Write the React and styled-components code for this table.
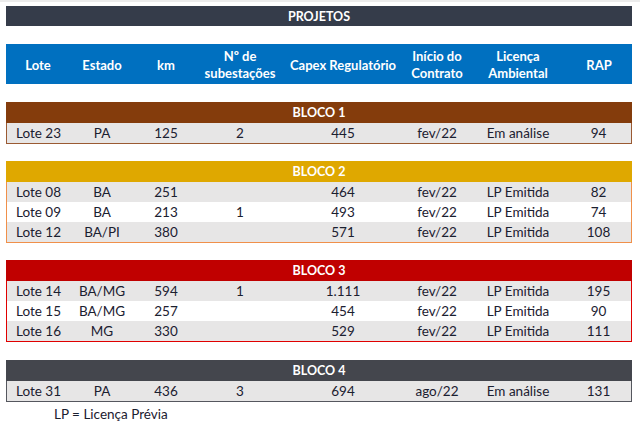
import { createGlobalStyle, styled } from "styled-components";

const GlobalStyle = createGlobalStyle`
  body {
    margin: 0;
    background: #ffffff;
    font-family: Lato, "Open Sans", sans-serif;
  }
`;

const COLUMNS = "64px 64px 64px 84px 122px 66px 96px 66px";
// body rows sit inside a 1px border on each side
const ROW_COLUMNS = "63px 64px 64px 84px 122px 66px 96px 65px";

const Page = styled.div`
  width: 640px;
  height: 427px;
  box-sizing: border-box;
  border-top: 2px solid #ececec;
  padding: 4px 8px 0 6px;
  display: flex;
  flex-direction: column;
`;

const TitleBar = styled.div`
  height: 20px;
  background: #353c4a;
  color: #ffffff;
  font-weight: 700;
  font-size: 12.5px;
  display: flex;
  align-items: center;
  justify-content: center;
`;

const HeaderRow = styled.div`
  margin-top: 18px;
  height: 40px;
  background: #0070c0;
  display: grid;
  grid-template-columns: ${COLUMNS};
  color: #ffffff;
  font-weight: 700;
  font-size: 13px;
  line-height: 17px;
`;

const HeaderCell = styled.div`
  display: flex;
  align-items: center;
  justify-content: center;
  text-align: center;
  padding-top: 2px;
`;

const Block = styled.div`
  margin-top: ${(p) => p.$gap}px;
`;

const BlockBar = styled.div`
  height: 21px;
  background: ${(p) => p.$color};
  color: #ffffff;
  font-weight: 700;
  font-size: 12.5px;
  display: flex;
  align-items: center;
  justify-content: center;
`;

const BlockBody = styled.div`
  border: 1px solid ${(p) => p.$border};
  border-top: none;
`;

const Row = styled.div`
  height: 20px;
  display: grid;
  grid-template-columns: ${ROW_COLUMNS};
  background: ${(p) => (p.$shade ? "#e7e6e6" : "#ffffff")};
  color: #1b2030;
  font-size: 13.5px;
  align-items: center;
`;

const Cell = styled.div`
  text-align: ${(p) => (p.$left ? "left" : "center")};
  padding-left: ${(p) => (p.$left ? "9px" : "0")};
  white-space: nowrap;
`;

const Footnote = styled.div`
  margin-top: 4px;
  padding-left: 48px;
  font-size: 13.5px;
  color: #1b2030;
`;

const blocks = [
  {
    name: "BLOCO 1",
    color: "#843c0c",
    border: "#9a5a33",
    gap: 18,
    rows: [["Lote 23", "PA", "125", "2", "445", "fev/22", "Em análise", "94"]],
  },
  {
    name: "BLOCO 2",
    color: "#dfa800",
    border: "#f0904a",
    gap: 17,
    rows: [
      ["Lote 08", "BA", "251", "", "464", "fev/22", "LP Emitida", "82"],
      ["Lote 09", "BA", "213", "1", "493", "fev/22", "LP Emitida", "74"],
      ["Lote 12", "BA/PI", "380", "", "571", "fev/22", "LP Emitida", "108"],
    ],
  },
  {
    name: "BLOCO 3",
    color: "#c00000",
    border: "#e00000",
    gap: 17,
    rows: [
      ["Lote 14", "BA/MG", "594", "1", "1.111", "fev/22", "LP Emitida", "195"],
      ["Lote 15", "BA/MG", "257", "", "454", "fev/22", "LP Emitida", "90"],
      ["Lote 16", "MG", "330", "", "529", "fev/22", "LP Emitida", "111"],
    ],
  },
  {
    name: "BLOCO 4",
    color: "#44464d",
    border: "#55575e",
    gap: 18,
    rows: [["Lote 31", "PA", "436", "3", "694", "ago/22", "Em análise", "131"]],
  },
];

const headers = [
  "Lote",
  "Estado",
  "km",
  ["Nº de", "subestações"],
  "Capex Regulatório",
  ["Início do", "Contrato"],
  ["Licença", "Ambiental"],
  "RAP",
];

export default function App() {
  return (
    <Page>
      <GlobalStyle />
      <TitleBar>PROJETOS</TitleBar>
      <HeaderRow>
        {headers.map((h, i) => (
          <HeaderCell key={i}>
            {Array.isArray(h) ? (
              <span>
                {h[0]}
                <br />
                {h[1]}
              </span>
            ) : (
              h
            )}
          </HeaderCell>
        ))}
      </HeaderRow>
      {blocks.map((b) => (
        <Block key={b.name} $gap={b.gap}>
          <BlockBar $color={b.color}>{b.name}</BlockBar>
          <BlockBody $border={b.border}>
            {b.rows.map((r, i) => (
              <Row key={r[0]} $shade={i % 2 === 0}>
                {r.map((v, j) => (
                  <Cell key={j} $left={j === 0}>
                    {v}
                  </Cell>
                ))}
              </Row>
            ))}
          </BlockBody>
        </Block>
      ))}
      <Footnote>LP = Licença Prévia</Footnote>
    </Page>
  );
}
